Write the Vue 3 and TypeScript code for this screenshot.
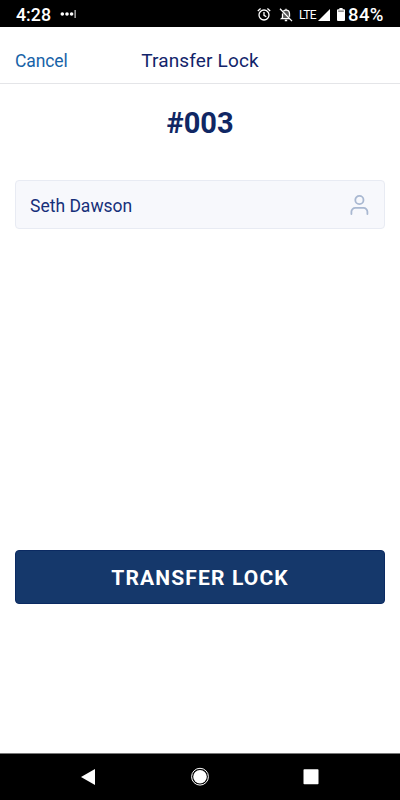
<script setup lang="ts">
import { ref } from 'vue'

const lockNumber = ref('#003')
const recipient = ref('Seth Dawson')
</script>

<template>
  <div class="screen">
    <div class="status">
      <span class="clock">4:28</span>
      <svg class="more" width="17" height="10" viewBox="0 0 17 10" fill="#fff">
        <circle cx="2.3" cy="4" r="1.8" />
        <circle cx="7" cy="4" r="1.8" />
        <circle cx="11.6" cy="4" r="1.8" />
        <rect x="14.6" y="0" width="1" height="8" />
      </svg>
      <svg class="alarm" width="14" height="14" viewBox="0 0 14 14" fill="none" stroke="#fff" stroke-width="1.3">
        <circle cx="7" cy="7" r="5" />
        <path d="M7 4.100V7.400l2.300 1.400M.8 2.900 3.600.5M13.200 2.900 10.400.5" />
      </svg>
      <svg class="bell" width="14" height="14" viewBox="0 0 14 14" fill="none" stroke="#fff" stroke-width="1.3">
        <path d="M3.500 10.300V5.700C3.500 3.500 5 2.100 7 2.100s3.500 1.400 3.500 3.600v4.600z" fill="#555" stroke="none" />
        <path d="M4.500 3.200C5 2.500 5.800 2.100 7 2.100c2.200 0 3.500 1.600 3.500 3.600v3M3.500 5.400V9.700l-1 .9h8.200M7 2.100V.7M5.800 12.500h2.400M1 .7l12 12.400" />
      </svg>
      <span class="network">LTE</span>
      <svg class="signal" width="12" height="12" viewBox="0 0 12 12" fill="#fff"><path d="M12 0v12H0z" /></svg>
      <svg class="battery" width="8" height="13" viewBox="0 0 8 13" fill="#fff">
        <path d="M2.400 0h3.200v1.300H7q1 0 1 1V12q0 1-1 1H1q-1 0-1-1V2.300q0-1 1-1h1.400z" />
        <rect x="1.200" y="2.500" width="5.600" height="1.300" fill="#777" />
      </svg>
      <span class="percent">84%</span>
    </div>

    <header class="header">
      <a class="cancel">Cancel</a>
      <h1 class="title">Transfer Lock</h1>
    </header>

    <main class="content">
      <h2 class="number">{{ lockNumber }}</h2>
      <div class="field">
        <span class="name">{{ recipient }}</span>
        <svg width="20" height="22" viewBox="0 0 20 22" fill="none" stroke="#a9b8d1" stroke-width="1.800" stroke-linecap="round">
          <circle cx="10.400" cy="6" r="4.100" />
          <path d="M2.400 20v-2.200a3.900 3.900 0 0 1 3.900-3.900h8.200a3.900 3.900 0 0 1 3.900 3.900V20" />
        </svg>
      </div>
      <button class="submit">TRANSFER LOCK</button>
    </main>

    <nav class="nav">
      <svg width="16" height="18" viewBox="0 0 16 18" fill="#fff"><path d="M15 1v16L1 9z" /></svg>
      <svg width="20" height="20" viewBox="0 0 20 20">
        <circle cx="10" cy="9.700" r="8.400" fill="none" stroke="#fff" stroke-width="1" />
        <circle cx="10" cy="9.700" r="6.800" fill="#fff" />
      </svg>
      <svg width="16" height="16" viewBox="0 0 16 16"><rect x=".5" y=".2" width="15" height="15" rx=".8" fill="#fff" /></svg>
    </nav>
  </div>
</template>

<style>
body {
  margin: 0;
  background: #fff;
}
</style>

<style scoped>
.screen {
  display: flex;
  flex-direction: column;
  height: 800px;
  width: 400px;
  overflow: hidden;
  background: #fff;
  font-family: Roboto, "Liberation Sans", sans-serif;
}
.status {
  display: flex;
  align-items: center;
  box-sizing: border-box;
  height: 27px;
  padding: 2px 0 0 16px;
  background: #000;
  color: #fff;
  flex: none;
}
.status svg {
  flex: none;
}
.clock {
  width: 35px;
  font-size: 17.8px;
  font-weight: 500;
}
.more {
  margin-left: 9px;
}
.alarm {
  margin-left: 180px;
}
.bell {
  margin-left: 8px;
}
.network {
  width: 18px;
  margin-left: 6px;
  font-size: 12px;
  letter-spacing: -0.6px;
}
.signal {
  margin-left: 1px;
}
.battery {
  margin-left: 7px;
}
.percent {
  margin-left: 3px;
  font-size: 18.5px;
  font-weight: 500;
  letter-spacing: 0.4px;
}
.header {
  display: grid;
  grid-template-columns: 1fr auto 1fr;
  align-items: center;
  box-sizing: border-box;
  height: 57px;
  padding: 11px 15px 0;
  border-bottom: 1px solid #e4e5e8;
  flex: none;
}
.cancel {
  color: #1763a8;
  font-size: 17.5px;
  letter-spacing: -0.1px;
}
.title {
  margin: 0;
  color: #12246a;
  font-size: 19px;
  font-weight: 400;
  letter-spacing: 0.15px;
}
.content {
  display: flex;
  flex-direction: column;
  flex: 1;
  padding: 19px 15px 0;
}
.number {
  margin: 0;
  color: #102764;
  font-size: 29px;
  font-weight: 700;
  line-height: 40px;
  text-align: center;
}
.field {
  display: flex;
  align-items: center;
  justify-content: space-between;
  box-sizing: border-box;
  height: 49px;
  margin-top: 37px;
  padding: 0 15px 0 14px;
  border: 1px solid #e8ebf3;
  border-radius: 4px;
  background: #f7f8fc;
}
.name {
  padding-top: 2px;
  color: #16307a;
  font-size: 17.5px;
}
.submit {
  height: 53.5px;
  margin: 321px 0 0;
  padding: 3px 0 0;
  border: 1px solid #0b2a62;
  border-radius: 4px;
  background: #15386b;
  color: #fff;
  font-family: inherit;
  font-size: 21px;
  font-weight: 700;
  letter-spacing: 1.15px;
}
.nav {
  display: flex;
  align-items: center;
  justify-content: space-between;
  box-sizing: border-box;
  height: 47px;
  padding: 0 81px 0 80px;
  border-top: 1px solid #777;
  background: #000;
  flex: none;
}
</style>
